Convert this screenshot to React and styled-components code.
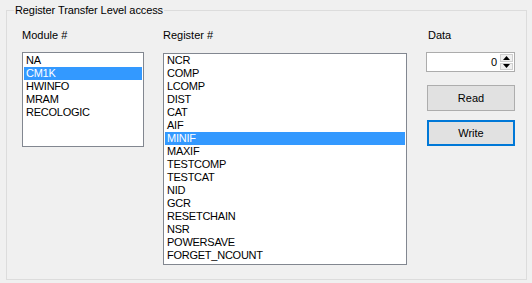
import React, { useState } from 'react'
import styled, { createGlobalStyle } from 'styled-components'

const modules = ['NA', 'CM1K', 'HWINFO', 'MRAM', 'RECOLOGIC']
const registers = [
  'NCR', 'COMP', 'LCOMP', 'DIST', 'CAT', 'AIF', 'MINIF', 'MAXIF', 'TESTCOMP',
  'TESTCAT', 'NID', 'GCR', 'RESETCHAIN', 'NSR', 'POWERSAVE', 'FORGET_NCOUNT',
]

export default function App() {
  const [module, setModule] = useState('CM1K')
  const [register, setRegister] = useState('MINIF')
  const [data, setData] = useState(0)

  return (
    <>
      <GlobalStyle />
      <Window>
        <GroupBox>
          <Legend>Register Transfer Level access</Legend>

          <Column>
            <Label>Module #</Label>
            <ListBox $top={10} $height={95}>
              {modules.map((m) => (
                <Item key={m} $selected={m === module} onClick={() => setModule(m)}>
                  {m}
                </Item>
              ))}
            </ListBox>
          </Column>

          <Column>
            <Label>Register #</Label>
            <ListBox $top={11} $height={212} $pad={0}>
              {registers.map((r) => (
                <Item key={r} $selected={r === register} onClick={() => setRegister(r)}>
                  {r}
                </Item>
              ))}
            </ListBox>
          </Column>

          <Column>
            <Label $indent={2}>Data</Label>
            <NumericBox>
              <NumberValue>{data}</NumberValue>
              <Spinner>
                <SpinButton onClick={() => setData(data + 1)}>
                  <svg width="7" height="4" viewBox="0 0 7 4"><path d="M0 4 L3.5 0 L7 4 Z" fill="#000" /></svg>
                </SpinButton>
                <SpinButton onClick={() => setData(Math.max(0, data - 1))}>
                  <svg width="7" height="4" viewBox="0 0 7 4"><path d="M0 0 L7 0 L3.5 4 Z" fill="#000" /></svg>
                </SpinButton>
              </Spinner>
            </NumericBox>
            <Buttons>
              <Button>Read</Button>
              <Button $focused>Write</Button>
            </Buttons>
          </Column>
        </GroupBox>
      </Window>
    </>
  )
}

const GlobalStyle = createGlobalStyle`
  html, body {
    margin: 0;
    padding: 0;
    background: #f0f0f0;
  }
  body {
    font-family: "Liberation Sans", Arial, sans-serif;
    font-size: 11px;
    color: #000;
  }
`

const Window = styled.div`
  width: 532px;
  height: 283px;
  padding: 10px 0 0 6px;
  box-sizing: border-box;
  overflow: hidden;
`

const GroupBox = styled.div`
  position: relative;
  box-sizing: border-box;
  width: 521px;
  height: 270px;
  border: 1px solid #dcdcdc;
  padding: 18px 0 0 15px;
  display: grid;
  grid-template-columns: 122px 244px 89px;
  column-gap: 19px;
  align-items: start;
`

const Legend = styled.div`
  position: absolute;
  top: -7px;
  left: 7px;
  padding: 0 1px;
  background: #f0f0f0;
  font-size: 11px;
  line-height: 13px;
  letter-spacing: -0.1px;
  white-space: nowrap;
`

const Column = styled.div`
  display: flex;
  flex-direction: column;
`

const Label = styled.div`
  line-height: 13px;
  height: 13px;
  padding-left: ${(p) => p.$indent || 0}px;
  white-space: nowrap;
`

const ListBox = styled.div`
  box-sizing: border-box;
  margin-top: ${(p) => p.$top}px;
  height: ${(p) => p.$height}px;
  border: 1px solid #828790;
  background: #fff;
  padding: ${(p) => (p.$pad ?? 1)}px 1px 1px 1px;
  overflow: hidden;
`

const Item = styled.div`
  height: 13px;
  line-height: 13px;
  padding-left: 2px;
  letter-spacing: -0.25px;
  white-space: nowrap;
  cursor: default;
  background: ${(p) => (p.$selected ? '#3399ff' : 'transparent')};
  color: ${(p) => (p.$selected ? '#fff' : '#000')};
`

const NumericBox = styled.div`
  box-sizing: border-box;
  margin-top: 10px;
  height: 20px;
  border: 1px solid #acacac;
  background: #fff;
  display: flex;
  align-items: stretch;
  padding: 1px 1px 1px 0;
`

const NumberValue = styled.div`
  flex: 1;
  text-align: right;
  line-height: 16px;
  padding-right: 3px;
`

const Spinner = styled.div`
  width: 13px;
  display: flex;
  flex-direction: column;
  gap: 1px;
`

const SpinButton = styled.div`
  flex: 1;
  background: #f0f0f0;
  border: 1px solid #cfcfcf;
  box-sizing: border-box;
  display: flex;
  align-items: center;
  justify-content: center;
`

const Buttons = styled.div`
  display: flex;
  flex-direction: column;
  gap: 9px;
  margin: 13px 0 0 1px;
`

const Button = styled.button`
  box-sizing: border-box;
  width: 88px;
  height: 26px;
  padding: 0;
  font-family: "Liberation Sans", Arial, sans-serif;
  font-size: 11px;
  color: #000;
  background: #e1e1e1;
  border: ${(p) => (p.$focused ? '2px solid #0078d7' : '1px solid #adadad')};
  cursor: pointer;
`
